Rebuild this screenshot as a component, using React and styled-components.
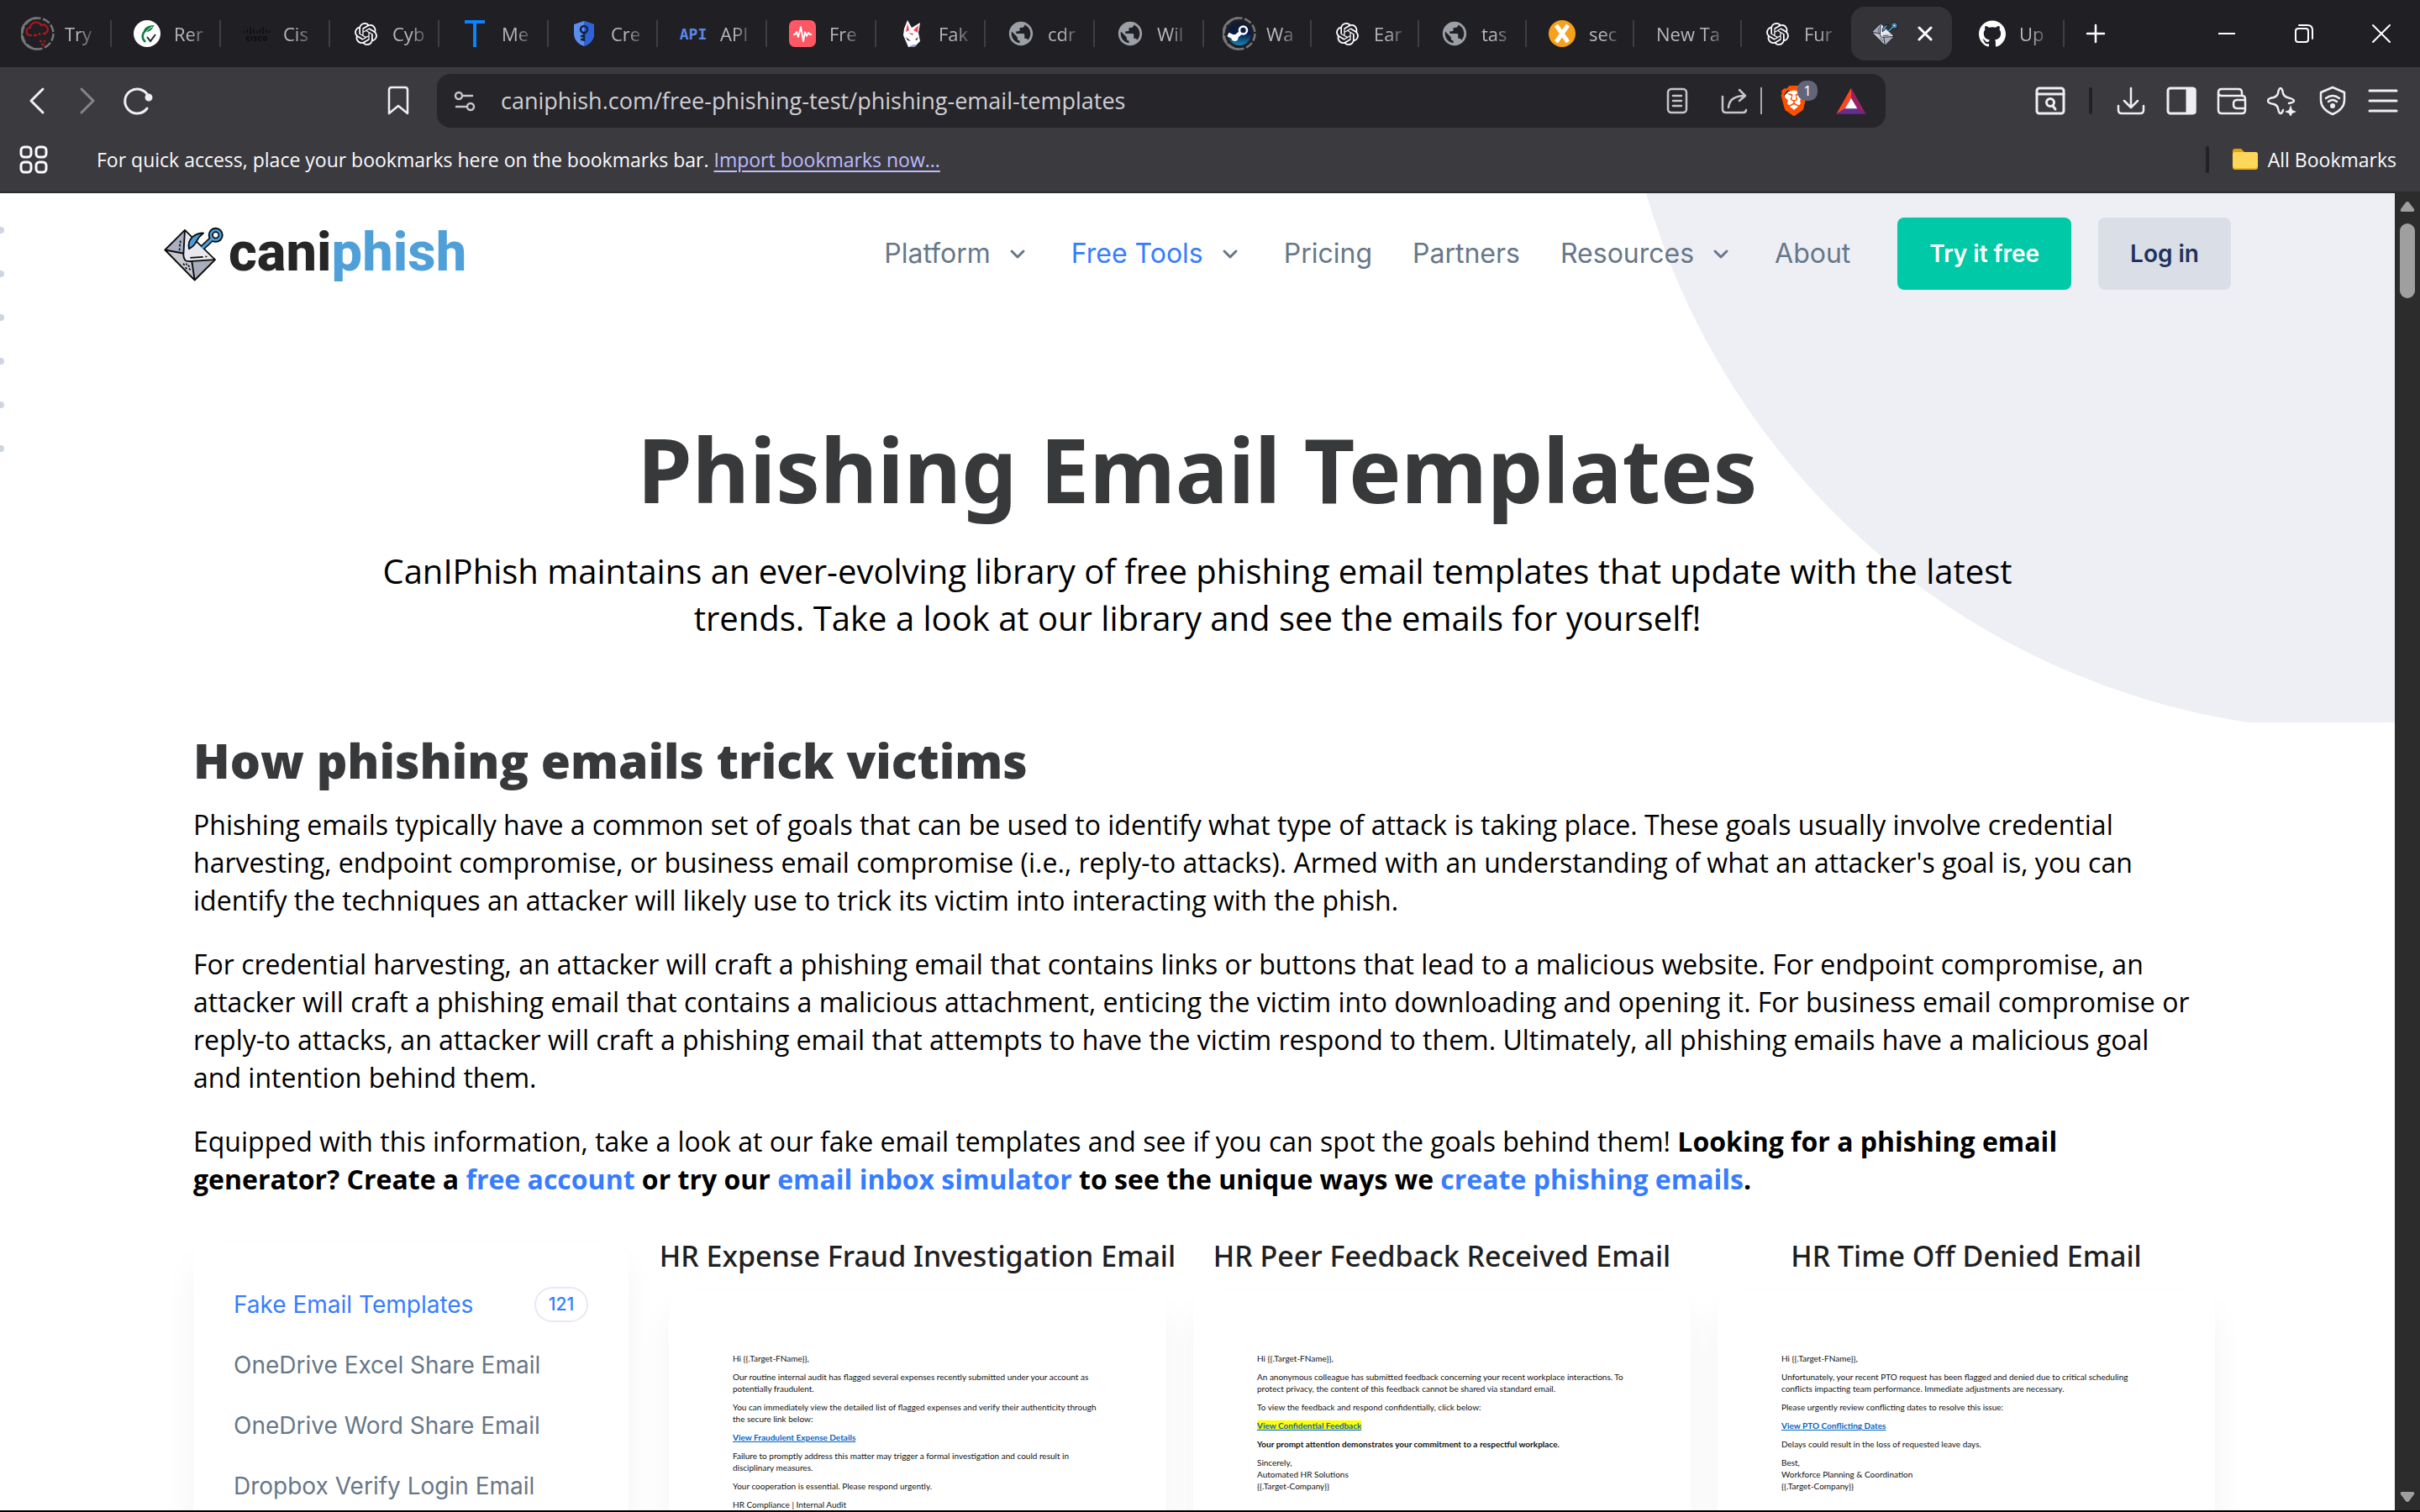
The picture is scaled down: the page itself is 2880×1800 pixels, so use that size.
import React from 'react';
import styled, { createGlobalStyle, css } from 'styled-components';
import { SiOpenai, SiGithub, SiCisco, SiBrave } from 'react-icons/si';
import { MdPublic } from 'react-icons/md';

const UI = '"Open Sans", "Noto Sans", sans-serif';
const SEGOE = '"Noto Sans", "Open Sans", sans-serif';
const INTER = 'Inter, "Open Sans", sans-serif';

const GlobalStyle = createGlobalStyle`
  *, *::before, *::after { box-sizing: border-box; }
  body { margin: 0; background: #000; overflow: hidden; }
  button { font: inherit; color: inherit; background: none; border: 0; padding: 0; cursor: pointer; }
  h1, h2, h3, p, ul { margin: 0; padding: 0; }
  ul { list-style: none; }
  svg { display: block; flex: none; }
  a { text-decoration: none; }
`;

const Window = styled.div`
  height: 100vh;
  display: flex;
  flex-direction: column;
  border-bottom: 2px solid #000;
  font-family: ${UI};
`;

/* ---------- tab strip ---------- */

const TabStrip = styled.div`
  height: 80px;
  flex: none;
  display: flex;
  align-items: center;
  padding-left: 3px;
  background: #201f24;
  color: #b9b8bd;
`;

const Tab = styled.button`
  flex: 0 0 ${(p) => (p.$wide ? 130 : 128)}px;
  min-width: 0;
  display: flex;
  align-items: center;
  gap: 16px;
  height: 32px;
  padding: 0 ${(p) => (p.$wide ? 16 : 14)}px 0 26px;
  border-right: 2px solid ${(p) => (p.$noRule ? 'transparent' : '#3f3e43')};
  font-size: 22px;
  line-height: 32px;
  text-align: left;
`;

const TabIcon = styled.span`
  width: 32px;
  height: 32px;
  flex: none;
  display: flex;
  align-items: center;
  justify-content: center;
  color: ${(p) => p.$color || '#fff'};
`;

const TabLabel = styled.span`
  flex: none;
  white-space: nowrap;
  mask-image: linear-gradient(90deg, #000 calc(100% - 16px), rgba(0, 0, 0, 0.35));
`;

const ActiveTab = styled.div`
  width: 120px;
  height: 64px;
  flex: none;
  display: flex;
  align-items: center;
  justify-content: space-between;
  margin: 0 6px 0 2px;
  padding: 0 22px 0 24px;
  border-radius: 16px;
  background: #343338;
  color: #fff;
`;

const NewTab = styled.button`
  width: 74px;
  height: 64px;
  display: flex;
  align-items: center;
  justify-content: center;
  color: #fff;
`;

const WindowControls = styled.div`
  display: flex;
  margin-left: auto;
  color: #fff;
`;

const WindowButton = styled.button`
  width: 92px;
  height: 80px;
  display: flex;
  align-items: center;
  justify-content: center;
`;

const ApiMark = styled.span`
  font: 700 18px "DejaVu Sans Mono", monospace;
  color: #5b86e5;
`;

/* ---------- toolbar ---------- */

const Toolbar = styled.div`
  height: 80px;
  flex: none;
  display: flex;
  align-items: center;
  padding: 0 26px;
  background: #3b3a3f;
  color: #efeef2;
`;

const IconGroup = styled.div`
  display: flex;
  align-items: center;
  gap: 24px;
`;

const IconButton = styled.button`
  width: 36px;
  height: 36px;
  flex: none;
  display: flex;
  align-items: center;
  justify-content: center;
  color: ${(p) => (p.$dim ? '#85848a' : 'inherit')};
`;

const BookmarkSlot = styled.div`
  margin: 0 28px 0 274px;
`;

const AddressBar = styled.div`
  flex: 1;
  height: 64px;
  display: flex;
  align-items: center;
  margin-right: 178px;
  padding: 0 23px 0 15px;
  border-radius: 16px;
  background: #26252a;
  color: #c6c5ca;
`;

const AddressInput = styled.input`
  flex: 1;
  min-width: 0;
  height: 48px;
  margin-left: 25px;
  padding: 0;
  border: 0;
  outline: 0;
  background: none;
  color: #d0cfd4;
  font: 400 27px/48px ${UI};
`;

const AddressActions = styled.div`
  display: flex;
  align-items: center;
  gap: 32px;
`;

const ThinRule = styled.span`
  width: 2px;
  height: 32px;
  margin: 0 20px 0 13px;
  background: #a9a8ad;
`;

const DarkRule = styled.span`
  width: 4px;
  height: 32px;
  margin: 0 4px;
  border-radius: 2px;
  background: #222126;
`;

const ShieldWrap = styled.button`
  position: relative;
  width: 36px;
  height: 36px;
  display: flex;
  align-items: center;
  justify-content: center;
`;

const ShieldFace = styled.span`
  display: flex;
  color: #ff5000;
  background: radial-gradient(circle at 50% 48%, #fff 12px, transparent 12px);
`;

const ShieldCount = styled.span`
  position: absolute;
  left: 22px;
  top: -6px;
  width: 24px;
  height: 24px;
  border-radius: 10px;
  background: #62657a;
  color: #fff;
  font-size: 17px;
  line-height: 24px;
  text-align: center;
`;

/* ---------- bookmarks bar ---------- */

const BookmarksBar = styled.div`
  height: 70px;
  flex: none;
  display: flex;
  align-items: center;
  padding: 0 28px 8px 22px;
  border-bottom: 2px solid #2b2a2f;
  background: #3b3a3f;
  color: #fbfbfc;
  font-size: 23px;
  line-height: 32px;
`;

const BookmarksHint = styled.p`
  margin-left: 57px;
`;

const ImportLink = styled.a`
  color: #bdbcff;
  text-decoration: underline;
  text-decoration-thickness: 2px;
  text-underline-offset: 4px;
`;

const AllBookmarks = styled.button`
  display: flex;
  align-items: center;
  gap: 12px;
`;

const AllBookmarksGroup = styled.div`
  display: flex;
  align-items: center;
  gap: 24px;
  margin-left: auto;
`;

/* ---------- page ---------- */

const Viewport = styled.div`
  flex: 1;
  min-height: 0;
  display: flex;
  background: #fff;
`;

const Page = styled.div`
  position: relative;
  flex: 1;
  min-width: 0;
  overflow: hidden;
`;

const Backdrop = styled.div`
  position: absolute;
  inset: 0 0 auto 0;
  height: 630px;
  overflow: hidden;

  &::before {
    content: '';
    position: absolute;
    top: -1126px;
    right: -841px;
    width: 1766px;
    height: 1766px;
    border-radius: 50%;
    background: #eeeff5;
  }
`;

const EdgeDots = styled.div`
  position: absolute;
  left: -3px;
  top: 40px;
  display: flex;
  flex-direction: column;
  gap: 44px;
`;

const EdgeDot = styled.span`
  width: 8px;
  height: 8px;
  border-radius: 50%;
  background: #cdd6e0;
`;

const SiteHeader = styled.header`
  position: relative;
  max-width: 2460px;
  margin: 0 auto;
  padding: 29px 0;
  display: flex;
  align-items: center;
  justify-content: space-between;
`;

const Brand = styled.a`
  display: flex;
  align-items: flex-start;
  gap: 5px;
  color: #262626;
  font: 800 65px/61px Roboto, sans-serif;
`;

const BrandAccent = styled.span`
  color: #4f9fd8;
`;

const Nav = styled.nav`
  display: flex;
  align-items: center;
  gap: 48px;
  font: 400 32px/48px ${INTER};
`;

const NavLink = styled.a`
  display: flex;
  align-items: center;
  gap: 20px;
  color: ${(p) => (p.$active ? '#377dff' : '#677788')};

  svg { color: #677788; margin-right: 4px; }
`;

const NavActions = styled.div`
  display: flex;
  gap: 32px;
  margin-left: 8px;
`;

const CtaButton = styled.button`
  height: 86px;
  padding: 0 38px;
  border-radius: 8px;
  font: 600 28px/40px ${INTER};
  ${(p) =>
    p.$primary
      ? css`background: #00c9a7; color: #fff;`
      : css`background: #d9dee7; color: #21325b;`}
`;

const Hero = styled.section`
  position: relative;
  padding: 123px 0 97px;
  text-align: center;
`;

const HeroTitle = styled.h1`
  color: #38393b;
  font: 700 105px/124px ${SEGOE};
`;

const HeroLead = styled.p`
  max-width: 2000px;
  margin: 31px auto 0;
  color: #000;
  font: 400 40px/56px ${UI};
`;

const Content = styled.main`
  position: relative;
  max-width: 2390px;
  margin: 0 auto;
  padding-top: 10px;
`;

const SectionTitle = styled.h2`
  margin-bottom: 20px;
  color: #38393b;
  font: 800 57px/68px ${UI};
`;

const Paragraph = styled.p`
  color: #000;
  font: 400 32px/45px ${UI};

  & + & { margin-top: 31px; }

  a { color: #377dff; font-weight: 700; }
`;

const Library = styled.div`
  display: flex;
  margin: 46px -32px 0 0;
`;

const cardSurface = css`
  border-radius: 24px;
  background: #fff;
  box-shadow: 0 24px 40px rgba(0, 0, 0, 0.05);
`;

const Sidebar = styled.aside`
  ${cardSurface}
  flex: 0 0 518px;
  min-height: 480px;
  margin: 8px 32px 0 0;
  padding: 52px 48px;
`;

const SideList = styled.ul`
  display: flex;
  flex-direction: column;
  gap: 30px;
`;

const SideItem = styled.li`
  display: flex;
  justify-content: space-between;
  align-items: center;
  height: 42px;
`;

const SideLink = styled.a`
  color: ${(p) => (p.$active ? '#377dff' : '#677788')};
  font: 400 28px/42px ${INTER};
`;

const Count = styled.span`
  width: 64px;
  height: 42px;
  border: 2px solid #e7eaf3;
  border-radius: 21px;
  color: #377dff;
  font: 500 21px/38px ${INTER};
  text-align: center;
`;

const Templates = styled.div`
  flex: 1;
  display: grid;
  grid-template-columns: repeat(3, minmax(0, 1fr));
`;

const Template = styled.article`
  display: flex;
  flex-direction: column;
  align-items: center;
`;

const TemplateTitle = styled.h3`
  color: #1e2022;
  font: 500 34px/46px ${SEGOE};
  white-space: nowrap;
`;

const Mail = styled.div`
  ${cardSurface}
  align-self: stretch;
  min-height: 420px;
  margin: 18px 16px 0;
  padding: 74px 76px;
  color: #111;
  font: 400 10px/14px Lato, sans-serif;
`;

const MailLine = styled.p`
  margin-bottom: 8px;
  white-space: pre-line;
  font-weight: ${(p) => (p.$bold ? 700 : 400)};
`;

const MailLink = styled.a`
  color: #0563c1;
  font-weight: 700;
  text-decoration: underline;
  background: ${(p) => (p.$marked ? '#ff0' : 'none')};
`;

const Scrollbar = styled.div`
  flex: 0 0 30px;
  display: flex;
  flex-direction: column;
  align-items: center;
  padding: 9px 0;
  background: #2c2c2c;
`;

const ScrollThumb = styled.div`
  width: 18px;
  height: 89px;
  margin: 13px 0 auto;
  border-radius: 9px;
  background: #9f9f9f;
`;

/* ---------- drawings ---------- */

const stroke = { fill: 'none', stroke: 'currentColor', strokeWidth: 3, strokeLinecap: 'round', strokeLinejoin: 'round' };

const EnvelopeHook = ({ width, height }) => (
  <svg width={width} height={height} viewBox="18 46 216 194" aria-hidden="true">
    <path d="M93 57L22 128l106 108 73-73z" fill="#c5c7d1" />
    <path d="M93 57L22 128l66 12z" fill="#a9afc0" />
    <path d="M118 168l83-5-73 73z" fill="#a7adbb" />
    <path d="M93 57l108 106-93 6q-20 0-20-24z" fill="#e6e8ee" />
    <path d="M93 57L22 128l106 108 73-73zM93 57l-5 88q0 24 20 24l93-6M22 128l64 12M118 170l10 66" fill="none" stroke="#0a0a0a" strokeWidth="5.5" strokeLinejoin="round" />
    <path d="M112 156l46-3M166 152h6" stroke="#0a0a0a" strokeWidth="5" fill="none" />
    <path d="M77 95v8M75 108v8M74 122v8M87 177l5 6M95 190l5 6M105 183l4 6M108 194l5 6M97 177l4 5" stroke="#0a0a0a" strokeWidth="5" fill="none" />
    <path d="M156 120l34-32" stroke="#0a0a0a" strokeWidth="19" fill="none" />
    <circle cx="203" cy="75" r="27" fill="#0a0a0a" />
    <path d="M154 122l36-34" stroke="#4a9dd8" strokeWidth="10" fill="none" />
    <circle cx="203" cy="75" r="16" fill="#fff" stroke="#4a9dd8" strokeWidth="11" />
    <circle cx="203" cy="75" r="11" fill="#fff" stroke="#0a0a0a" strokeWidth="5" />
    <path d="M108 124q-6-24 12-42 16-14 39-14-16 12-25 30-7 16-26 26z" fill="#4a9dd8" stroke="#0a0a0a" strokeWidth="5.5" strokeLinejoin="round" />
  </svg>
);

const DashedRing = ({ children }) => (
  <svg width="40" height="40" viewBox="0 0 40 40">
    <circle cx="20" cy="20" r="18.5" fill="none" stroke="#77767b" strokeWidth="2.5" strokeDasharray="9 2.6" />
    <path d="M19 1.5A18.5 18.5 0 0 0 19 38.5" fill="none" stroke="#77767b" strokeWidth="2.5" />
    {children}
  </svg>
);

const CloudIcon = () => (
  <DashedRing>
    <path d="M13 22h-2a4.5 4.5 0 0 1 0-9 7 7 0 0 1 13-3 5.5 5.5 0 0 1 6 9" fill="none" stroke="#b3151d" strokeWidth="2.2" />
    <path d="M15 22h4M22 19v3M26 20h4M22 29h3M27 29h2M24 33h4" stroke="#b3151d" strokeWidth="2.4" />
  </DashedRing>
);

const LeafIcon = () => (
  <svg width="32" height="32" viewBox="0 0 32 32">
    <circle cx="16" cy="16" r="16" fill="#fff" />
    <path d="M25 6c-8 0-13 3-13 8 5 1 10-2 11-6z" fill="#0b7a3e" />
    <path d="M22 8C12 11 7 19 14 26" fill="none" stroke="#0b7a3e" strokeWidth="2.6" />
    <path d="M22 8c-4 2-7 5-8 8" fill="none" stroke="#fff" strokeWidth="1" />
    <path d="M16 20l4 5 6-8" fill="none" stroke="#1d2733" strokeWidth="2" />
  </svg>
);

const TMark = () => (
  <svg width="26" height="32" viewBox="0 0 26 32"><path d="M1 0h24v4H15v28h-4V4H1z" fill="#0a84ff" /></svg>
);

const KeyShield = () => (
  <svg width="28" height="32" viewBox="0 0 28 32">
    <path d="M14 1l12 4v11c0 8-6 13-12 15C8 29 2 24 2 16V5z" fill="#5b8def" />
    <path d="M14 1l12 4v11c0 8-6 13-12 15z" fill="#2f62d9" />
    <circle cx="14" cy="11" r="4" fill="none" stroke="#15203c" strokeWidth="2.5" />
    <path d="M14 15v10M14 19h-4M14 23h-4" stroke="#15203c" strokeWidth="2.5" />
  </svg>
);

const PulseIcon = () => (
  <svg width="32" height="32" viewBox="0 0 32 32">
    <rect width="32" height="32" rx="7" fill="#ff5864" />
    <path d="M5 17h2l2-3 2 6 3-12 3 17 2-11 2 5 2-4 2 2h2" fill="none" stroke="#fff" strokeWidth="1.8" strokeLinejoin="round" />
  </svg>
);

const FoxIcon = () => (
  <svg width="32" height="32" viewBox="0 0 32 32">
    <path d="M11 0l5 9 10-6-2 12 2 10-7 7h-7L6 18l1-8z" fill="#fff" />
    <path d="M11 4l2 8-4 2zM24 6l-1 9-5-3zM12 15l6 1-1 2z" fill="#e8475c" />
    <path d="M9 20l6 5-4-1zM20 23l4-3-2 4z" fill="#2a2a33" />
    <path d="M13 31l6-2 3 1-3 2h-5z" fill="#8e93cf" />
  </svg>
);

const SteamRing = () => (
  <DashedRing>
    <defs>
      <linearGradient id="steam" x1="0" y1="0" x2="0" y2="1">
        <stop offset="0" stopColor="#111d2e" /><stop offset=".5" stopColor="#0a1b48" /><stop offset="1" stopColor="#1387b8" />
      </linearGradient>
    </defs>
    <circle cx="20" cy="20" r="14" fill="url(#steam)" />
    <path d="M6.5 21l8 4 9-8" fill="none" stroke="#fff" strokeWidth="5" strokeLinejoin="round" />
    <circle cx="14.5" cy="25" r="4" fill="#fff" />
    <circle cx="24.5" cy="16" r="4.5" fill="#0a1b48" stroke="#fff" strokeWidth="2.6" />
  </DashedRing>
);

const XDisc = () => (
  <svg width="32" height="32" viewBox="0 0 32 32">
    <circle cx="16" cy="16" r="16" fill="#f8a01c" />
    <path d="M9 6l14 20M23 6L9 26" stroke="#fff" strokeWidth="5" />
  </svg>
);

const Chevron = () => (
  <svg width="24" height="24" viewBox="0 0 24 24"><path {...stroke} d="M5 9l7 7 7-7" /></svg>
);

const ScrollArrow = ({ down }) => (
  <svg width="18" height="14" viewBox="0 0 18 14">
    <path d={down ? 'M2 1h14q2 1 1 3l-6 8q-2 2-4 0L1 4Q0 2 2 1z' : 'M2 13h14q2-1 1-3l-6-8Q9 0 7 2l-6 8q-1 2 1 3z'} fill="#9f9f9f" />
  </svg>
);

const Svg = ({ children, size = 36 }) => (
  <svg width={size} height={size} viewBox={`0 0 ${size} ${size}`} {...stroke}>{children}</svg>
);

const FolderIcon = () => (
  <svg width="30" height="28" viewBox="0 0 30 28">
    <path d="M0 4q0-3 3-3h7l4 4h12v6H0z" fill="#e3a008" />
    <rect y="5" width="30" height="21" rx="3" fill="#e9b526" />
    <rect y="5" width="30" height="19" rx="3" fill="#fed65a" />
  </svg>
);

const BatIcon = () => (
  <svg width="36" height="36" viewBox="0 0 108 108">
    <path d="M54 8L1 101l31-19 22-38z" fill="#ff4724" />
    <path d="M54 8l53 93-31-19-22-38z" fill="#9e1f63" />
    <path d="M1 101h106L76 82H32z" fill="#662d91" />
    <path d="M54 44l22 38H32z" fill="#fff" />
  </svg>
);

/* ---------- data ---------- */

const openai = <SiOpenai size={27} />;
const globe = <MdPublic size={34} />;

const tabs = [
  { label: 'Try', icon: <CloudIcon />, wide: true },
  { label: 'Rer', icon: <LeafIcon />, wide: true },
  { label: 'Cis', icon: <SiCisco size={31} />, color: '#0b0b0d', wide: true },
  { label: 'Cyb', icon: openai, wide: true },
  { label: 'Me', icon: <TMark />, wide: true },
  { label: 'Cre', icon: <KeyShield />, wide: true },
  { label: 'API', icon: <ApiMark>API</ApiMark>, wide: true },
  { label: 'Fre', icon: <PulseIcon />, wide: true },
  { label: 'Fak', icon: <FoxIcon />, wide: true },
  { label: 'cdr', icon: globe, color: '#9aa0a6', wide: true },
  { label: 'Wil', icon: globe, color: '#9aa0a6', wide: true },
  { label: 'Wa', icon: <SteamRing /> },
  { label: 'Ear', icon: openai },
  { label: 'tas', icon: globe, color: '#9aa0a6' },
  { label: 'sec', icon: <XDisc /> },
  { label: 'New Ta' },
  { label: 'Fur', icon: openai, noRule: true },
];

const navItems = [
  { label: 'Platform', menu: true },
  { label: 'Free Tools', menu: true, active: true },
  { label: 'Pricing' },
  { label: 'Partners' },
  { label: 'Resources', menu: true },
  { label: 'About' },
];

const sideItems = ['OneDrive Excel Share Email', 'OneDrive Word Share Email', 'Dropbox Verify Login Email'];

const templates = [
  {
    title: 'HR Expense Fraud Investigation Email',
    lines: [
      { text: 'Hi {{.Target-FName}},' },
      { text: 'Our routine internal audit has flagged several expenses recently submitted under your account as potentially fraudulent.' },
      { text: 'You can immediately view the detailed list of flagged expenses and verify their authenticity through the secure link below:' },
      { text: 'View Fraudulent Expense Details', link: true },
      { text: 'Failure to promptly address this matter may trigger a formal investigation and could result in disciplinary measures.' },
      { text: 'Your cooperation is essential. Please respond urgently.' },
      { text: 'HR Compliance | Internal Audit' },
    ],
  },
  {
    title: 'HR Peer Feedback Received Email',
    lines: [
      { text: 'Hi {{.Target-FName}},' },
      { text: 'An anonymous colleague has submitted feedback concerning your recent workplace interactions. To protect privacy, the content of this feedback cannot be shared via standard email.' },
      { text: 'To view the feedback and respond confidentially, click below:' },
      { text: 'View Confidential Feedback', link: true, marked: true },
      { text: 'Your prompt attention demonstrates your commitment to a respectful workplace.', bold: true },
      { text: 'Sincerely,\nAutomated HR Solutions\n{{.Target-Company}}' },
    ],
  },
  {
    title: 'HR Time Off Denied Email',
    lines: [
      { text: 'Hi {{.Target-FName}},' },
      { text: 'Unfortunately, your recent PTO request has been flagged and denied due to critical scheduling conflicts impacting team performance. Immediate adjustments are necessary.' },
      { text: 'Please urgently review conflicting dates to resolve this issue:' },
      { text: 'View PTO Conflicting Dates', link: true },
      { text: 'Delays could result in the loss of requested leave days.' },
      { text: 'Best,\nWorkforce Planning & Coordination\n{{.Target-Company}}' },
    ],
  },
];

/* ---------- sections ---------- */

const BrowserTab = ({ tab }) => (
  <Tab $wide={tab.wide} $noRule={tab.noRule}>
    {tab.icon && <TabIcon $color={tab.color}>{tab.icon}</TabIcon>}
    <TabLabel>{tab.label}</TabLabel>
  </Tab>
);

const BrowserTabs = () => (
  <TabStrip>
    {tabs.map((tab, i) => <BrowserTab key={i} tab={tab} />)}
    <ActiveTab>
      <EnvelopeHook width={32} height={29} />
      <button aria-label="Close tab">
        <Svg size={20}><path d="M3 3l14 14M17 3L3 17" /></Svg>
      </button>
    </ActiveTab>
    <BrowserTab tab={{ label: 'Up', icon: <SiGithub size={32} /> }} />
    <NewTab aria-label="New tab"><Svg size={24}><path d="M12 2v20M2 12h20" strokeWidth="2.5" /></Svg></NewTab>
    <WindowControls>
      <WindowButton aria-label="Minimize"><Svg size={24}><path d="M2 12h20" strokeWidth="2" strokeLinecap="butt" /></Svg></WindowButton>
      <WindowButton aria-label="Restore">
        <Svg size={24}><rect x="2" y="6" width="15" height="16" rx="3" strokeWidth="2" /><path d="M6 2h10q6 0 6 6v10" strokeWidth="2" /></Svg>
      </WindowButton>
      <WindowButton aria-label="Close"><Svg size={24}><path d="M2 2l20 20M22 2L2 22" strokeWidth="2" /></Svg></WindowButton>
    </WindowControls>
  </TabStrip>
);

const BrowserToolbar = () => (
  <Toolbar>
    <IconGroup>
      <IconButton aria-label="Back"><Svg><path d="M25 4L11 18l14 14" /></Svg></IconButton>
      <IconButton aria-label="Forward" $dim><Svg><path d="M11 4l14 14-14 14" /></Svg></IconButton>
      <IconButton aria-label="Reload">
        <Svg><path d="M31 14A14.5 14.5 0 1 0 29 27" /><circle cx="31" cy="14" r="3" fill="currentColor" /></Svg>
      </IconButton>
    </IconGroup>
    <BookmarkSlot>
      <IconButton aria-label="Bookmark"><Svg><path d="M7 5q0-3 3-3h16q3 0 3 3v28L18 24 7 33z" strokeWidth="2.5" /></Svg></IconButton>
    </BookmarkSlot>
    <AddressBar>
      <IconButton aria-label="Site settings">
        <Svg><circle cx="11" cy="12" r="4" strokeWidth="2.5" /><path d="M16 12h11M8 25h11" strokeWidth="2.5" /><circle cx="25" cy="25" r="4" strokeWidth="2.5" /></Svg>
      </IconButton>
      <AddressInput aria-label="Address" defaultValue="caniphish.com/free-phishing-test/phishing-email-templates" />
      <AddressActions>
        <IconButton aria-label="Reader mode">
          <Svg><rect x="7" y="4" width="22" height="28" rx="4" strokeWidth="2.5" /><path d="M13 12h10M13 18h10M13 24h10" strokeWidth="2.5" /></Svg>
        </IconButton>
        <IconButton aria-label="Share">
          <Svg><path d="M4 13v15q0 4 4 4h20q4 0 4-3M11 26q1-14 20-14M24 5l7 7-7 6" strokeWidth="2.5" /></Svg>
        </IconButton>
      </AddressActions>
      <ThinRule />
      <AddressActions>
        <ShieldWrap aria-label="Shields">
          <ShieldFace><SiBrave size={36} /></ShieldFace>
          <ShieldCount>1</ShieldCount>
        </ShieldWrap>
        <IconButton aria-label="Rewards"><BatIcon /></IconButton>
      </AddressActions>
    </AddressBar>
    <IconGroup>
      <IconButton aria-label="Search this page">
        <Svg><rect x="2" y="3" width="32" height="30" rx="3" /><path d="M2 10h32M21 24l3 4" /><circle cx="18" cy="20" r="4.5" /></Svg>
      </IconButton>
      <DarkRule />
      <IconButton aria-label="Downloads">
        <Svg><path d="M18 3v22M10 18l8 8 8-8M3 24v5q0 4 4 4h22q4 0 4-4v-5" strokeWidth="2.5" /></Svg>
      </IconButton>
      <IconButton aria-label="Sidebar">
        <Svg><rect x="2" y="3" width="32" height="30" rx="3" /><path d="M25 4h9v28h-9z" fill="currentColor" /></Svg>
      </IconButton>
      <IconButton aria-label="Wallet">
        <Svg><path d="M30 12V8q0-4-4-4H6Q2 4 2 8t4 4h24q4 0 4 4v13q0 4-4 4H6q-4 0-4-4V8M34 17H24q-4 0-4 5t4 5h10" strokeWidth="2.5" /></Svg>
      </IconButton>
      <IconButton aria-label="Leo">
        <Svg><path d="M16 3q2 0 3 6 1 4 5 5 8 2 8 4t-6 3M16 3q-2 0-3 6-1 4-5 5-7 1-7 4t7 4q4 1 5 5 1 6 3 6 2 0 3-4" strokeWidth="2.5" /><path d="M28 23l2 6 5 2-5 2-2 4-2-4-5-2 5-2z" fill="currentColor" stroke="none" /></Svg>
      </IconButton>
      <IconButton aria-label="VPN">
        <Svg><path d="M18 2l14 6v9q0 11-14 17Q4 28 4 17V8z" strokeWidth="2.5" /><path d="M10 15q8-6 16 0M13 19q5-4 10 0" strokeWidth="2.5" /><circle cx="18" cy="24" r="1.5" fill="currentColor" /></Svg>
      </IconButton>
      <IconButton aria-label="Menu"><Svg><path d="M2 6h32M2 18h32M2 30h32" /></Svg></IconButton>
    </IconGroup>
  </Toolbar>
);

const Bookmarks = () => (
  <BookmarksBar>
    <IconButton aria-label="Tab groups">
      <Svg>
        <rect x="3" y="3" width="12" height="12" rx="4" /><rect x="21" y="3" width="12" height="12" rx="4" />
        <rect x="3" y="21" width="12" height="12" rx="4" /><rect x="21" y="21" width="12" height="12" rx="4" />
      </Svg>
    </IconButton>
    <BookmarksHint>
      For quick access, place your bookmarks here on the bookmarks bar. <ImportLink href="#import">Import bookmarks now...</ImportLink>
    </BookmarksHint>
    <AllBookmarksGroup>
      <DarkRule />
      <AllBookmarks><FolderIcon />All Bookmarks</AllBookmarks>
    </AllBookmarksGroup>
  </BookmarksBar>
);

export default function App() {
  return (
    <>
      <GlobalStyle />
      <Window>
        <BrowserTabs />
        <BrowserToolbar />
        <Bookmarks />
        <Viewport>
          <Page>
            <Backdrop />
            <EdgeDots>
              {[0, 1, 2, 3, 4, 5].map((i) => <EdgeDot key={i} />)}
            </EdgeDots>
            <SiteHeader>
              <Brand href="#home">
                <EnvelopeHook width={72} height={65} />
                <span>cani<BrandAccent>phish</BrandAccent></span>
              </Brand>
              <Nav>
                {navItems.map((item) => (
                  <NavLink key={item.label} href="#nav" $active={item.active}>
                    {item.label}
                    {item.menu && <Chevron />}
                  </NavLink>
                ))}
                <NavActions>
                  <CtaButton $primary>Try it free</CtaButton>
                  <CtaButton>Log in</CtaButton>
                </NavActions>
              </Nav>
            </SiteHeader>
            <Hero>
              <HeroTitle>Phishing Email Templates</HeroTitle>
              <HeroLead>
                CanIPhish maintains an ever-evolving library of free phishing email templates that update with the latest
                trends. Take a look at our library and see the emails for yourself!
              </HeroLead>
            </Hero>
            <Content>
              <SectionTitle>How phishing emails trick victims</SectionTitle>
              <Paragraph>
                Phishing emails typically have a common set of goals that can be used to identify what type of attack is
                taking place. These goals usually involve credential harvesting, endpoint compromise, or business email
                compromise (i.e., reply-to attacks). Armed with an understanding of what an attacker's goal is, you can
                identify the techniques an attacker will likely use to trick its victim into interacting with the phish.
              </Paragraph>
              <Paragraph>
                For credential harvesting, an attacker will craft a phishing email that contains links or buttons that
                lead to a malicious website. For endpoint compromise, an attacker will craft a phishing email that
                contains a malicious attachment, enticing the victim into downloading and opening it. For business email
                compromise or reply-to attacks, an attacker will craft a phishing email that attempts to have the victim
                respond to them. Ultimately, all phishing emails have a malicious goal and intention behind them.
              </Paragraph>
              <Paragraph>
                Equipped with this information, take a look at our fake email templates and see if you can spot the goals
                behind them! <strong>Looking for a phishing email generator? Create a</strong>{' '}
                <a href="#account">free account</a> <strong>or try our</strong>{' '}
                <a href="#simulator">email inbox simulator</a> <strong>to see the unique ways we</strong>{' '}
                <a href="#create">create phishing emails</a><strong>.</strong>
              </Paragraph>
              <Library>
                <Sidebar>
                  <SideList>
                    <SideItem>
                      <SideLink href="#all" $active>Fake Email Templates</SideLink>
                      <Count>121</Count>
                    </SideItem>
                    {sideItems.map((label) => (
                      <SideItem key={label}><SideLink href="#template">{label}</SideLink></SideItem>
                    ))}
                  </SideList>
                </Sidebar>
                <Templates>
                  {templates.map((t) => (
                    <Template key={t.title}>
                      <TemplateTitle>{t.title}</TemplateTitle>
                      <Mail>
                        {t.lines.map((line) => (
                          <MailLine key={line.text} $bold={line.bold}>
                            {line.link ? <MailLink href="#mail" $marked={line.marked}>{line.text}</MailLink> : line.text}
                          </MailLine>
                        ))}
                      </Mail>
                    </Template>
                  ))}
                </Templates>
              </Library>
            </Content>
          </Page>
          <Scrollbar>
            <ScrollArrow />
            <ScrollThumb />
            <ScrollArrow down />
          </Scrollbar>
        </Viewport>
      </Window>
    </>
  );
}
